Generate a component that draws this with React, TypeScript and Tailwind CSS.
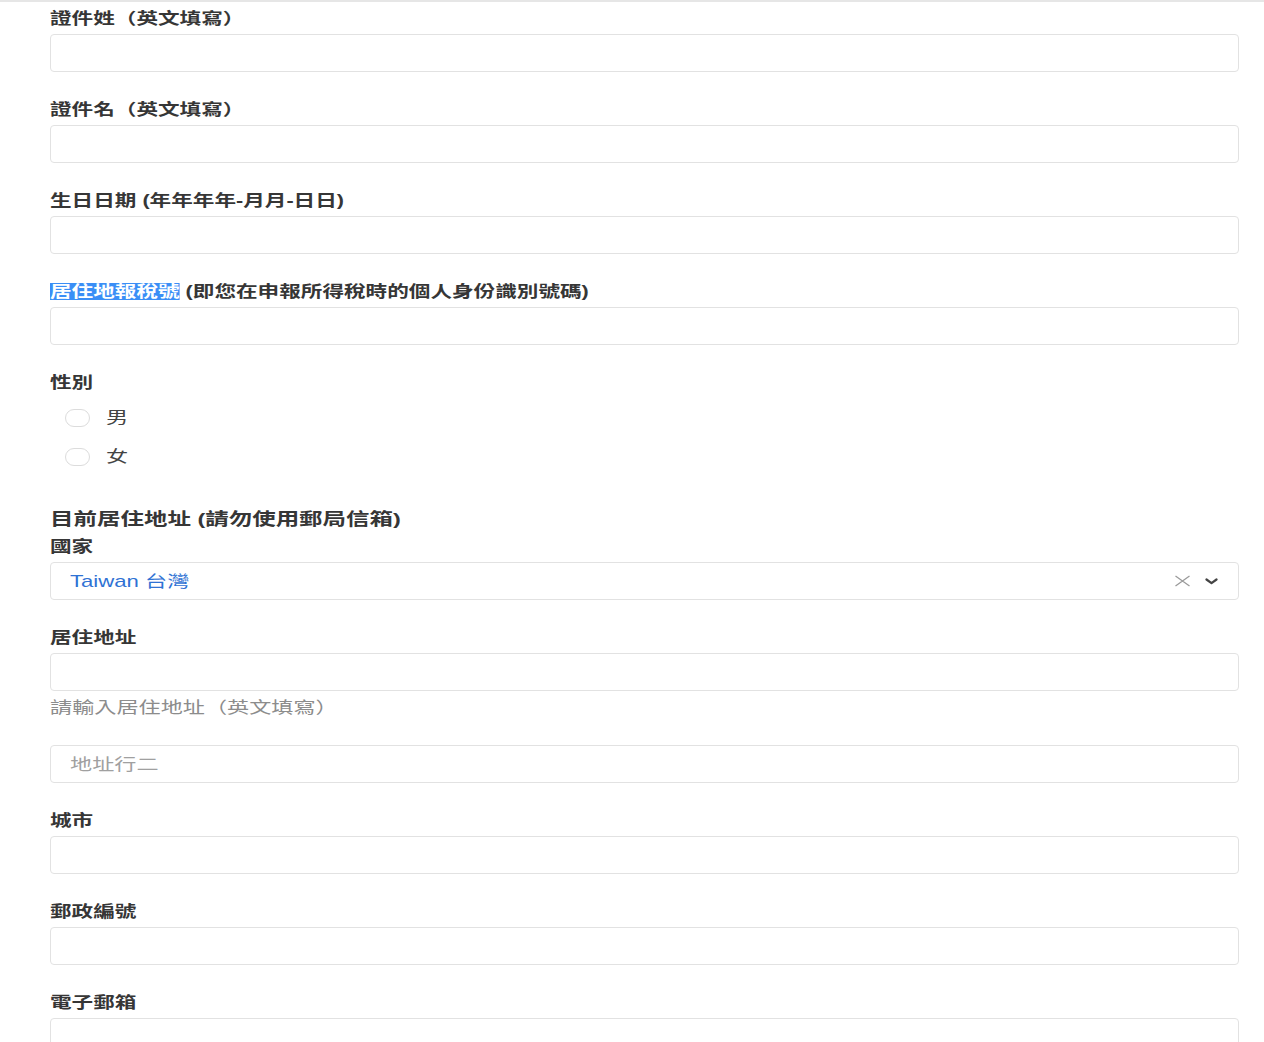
import React from "react";

const FONT = '"Liberation Sans", "Noto Sans CJK TC", sans-serif';

function T({ children, className = "" }: { children: React.ReactNode; className?: string }) {
  return (
    <span className={"inline-block origin-left scale-x-[1.35] whitespace-nowrap " + className}>
      {children}
    </span>
  );
}

function Label({ children, className = "" }: { children: React.ReactNode; className?: string }) {
  return (
    <div className={"h-[22px] leading-[26px] text-[16px] font-bold text-[#363636] " + className}>
      <T>{children}</T>
    </div>
  );
}

function Input({ placeholder }: { placeholder?: string }) {
  return (
    <div className="h-[38px] w-full rounded-[4px] border border-[#e2e2e2] bg-white flex items-center px-[19px]">
      {placeholder ? <T className="text-[16.4px] text-[#a0a0a0]">{placeholder}</T> : null}
    </div>
  );
}

function Field({ label, className = "" }: { label: React.ReactNode; className?: string }) {
  return (
    <div className={"flex flex-col gap-[6px] " + className}>
      <Label>{label}</Label>
      <Input />
    </div>
  );
}

function Radio({ label }: { label: string }) {
  return (
    <div className="h-[39px] flex items-center">
      <div className="ml-[15px] w-[25px] h-[18px] rounded-full border border-[#dcdcdc] bg-white" />
      <div className="ml-[16px] text-[16.4px] text-[#444]">
        <T>{label}</T>
      </div>
    </div>
  );
}

export default function App() {
  return (
    <div className="w-[1264px] h-[1042px] overflow-hidden bg-white" style={{ fontFamily: FONT }}>
      <div className="h-[2px] bg-[#e6e6e6]" />
      <div className="pl-[50px] pr-[25px] pt-[4px] flex flex-col">
        <Field label="證件姓（英文填寫）" />
        <Field className="mt-[25px]" label="證件名（英文填寫）" />
        <Field className="mt-[25px]" label="生日日期 (年年年年-月月-日日)" />
        <Field
          className="mt-[25px]"
          label={
            <>
              <span className="bg-[#3a8ef6] text-white">居住地報稅號</span> (即您在申報所得稅時的個人身份識別號碼)
            </>
          }
        />
        <div className="mt-[25px] flex flex-col">
          <Label>性別</Label>
          <div className="mt-[6px] flex flex-col">
            <Radio label="男" />
            <Radio label="女" />
          </div>
        </div>
        <div className="mt-[30px] flex flex-col gap-[6px]">
          <Label className="text-[17.4px]">目前居住地址 (請勿使用郵局信箱)</Label>
          <Label>國家</Label>
          <div className="h-[38px] w-full rounded-[4px] border border-[#e2e2e2] bg-white flex items-center pl-[19px] pr-[20px]">
            <T className="text-[16.4px] text-[#2f72d4]">Taiwan 台灣</T>
            <div className="flex-1" />
            <svg width="17" height="12" viewBox="0 0 17 12" className="mr-[14px]">
              <path d="M1.5 1 L15.5 11 M15.5 1 L1.5 11" stroke="#9a9a9a" strokeWidth="1.3" fill="none" />
            </svg>
            <svg width="13" height="7" viewBox="0 0 13 7">
              <path d="M1.5 1.5 L6.5 5.2 L11.5 1.5" stroke="#444" strokeWidth="2.2" fill="none" strokeLinecap="round" strokeLinejoin="round" />
            </svg>
          </div>
        </div>
        <div className="mt-[25px] flex flex-col gap-[6px]">
          <Label>居住地址</Label>
          <Input />
        </div>
        <div className="mt-[4px] h-[22px] leading-[24px] text-[16.4px] text-[#8c8c8c]">
          <T>請輸入居住地址（英文填寫）</T>
        </div>
        <div className="mt-[28px]">
          <Input placeholder="地址行二" />
        </div>
        <Field className="mt-[25px]" label="城市" />
        <Field className="mt-[25px]" label="郵政編號" />
        <Field className="mt-[25px]" label="電子郵箱" />
      </div>
    </div>
  );
}
